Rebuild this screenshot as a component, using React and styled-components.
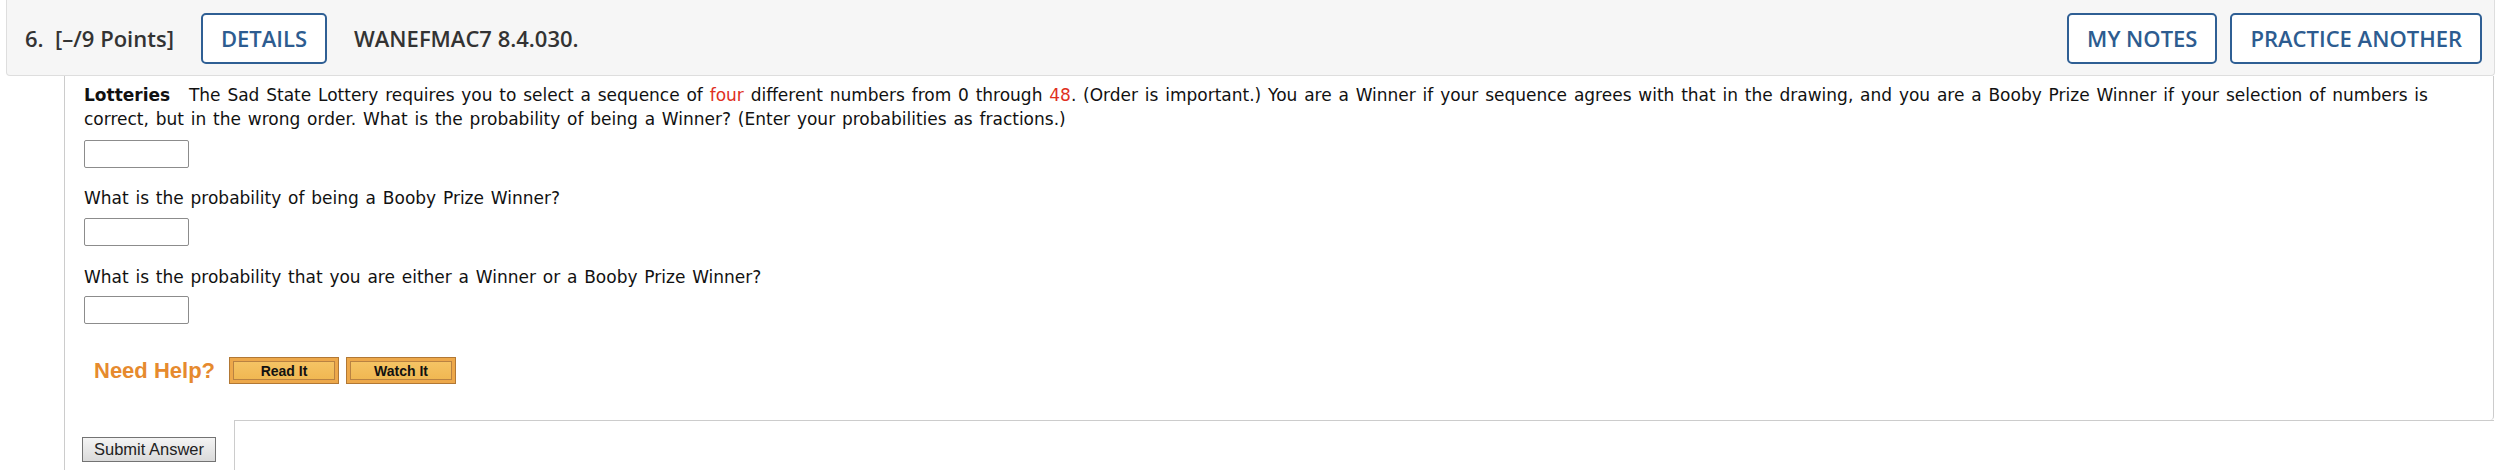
import React from 'react';
import styled, { createGlobalStyle } from 'styled-components';

const GlobalStyle = createGlobalStyle`
  body {
    margin: 0;
    background: #ffffff;
    font-family: "DejaVu Sans", Verdana, sans-serif;
  }
`;

const Page = styled.div`
  width: 2498px;
  height: 470px;
  overflow: hidden;
`;

const Header = styled.div`
  display: flex;
  align-items: center;
  justify-content: space-between;
  height: 75px;
  margin: 0 3px 0 6px;
  padding: 0 12px 0 18px;
  background: #f6f6f6;
  border: 1px solid #dedede;
  border-top: none;
  border-radius: 0 0 4px 4px;
  font-family: "Open Sans", sans-serif;
  font-size: 22px;
  font-weight: 600;
  color: #333333;
`;

const HeaderGroup = styled.div`
  display: flex;
  align-items: center;
  gap: ${p => p.gap || 13}px;
`;

const HeaderText = styled.span`
  white-space: pre;
`;

const OutlineButton = styled.button`
  height: 51px;
  padding: 0 18px;
  margin-top: 1px;
  background: #ffffff;
  border: 2px solid #2f5f94;
  border-radius: 5px;
  font-family: "Open Sans", sans-serif;
  font-size: 22px;
  font-weight: 600;
  color: #2d5c90;
  cursor: pointer;
`;

const Body = styled.div`
  margin: 0 4px 0 64px;
  border-left: 1px solid #cccccc;
  height: 394px;
`;

const Panel = styled.div`
  padding: 7px 40px 36px 19px;
  border-right: 1px solid #cccccc;
  border-bottom-right-radius: 4px;
  font-size: 17px;
  line-height: 24px;
  word-spacing: 1.4px;
  color: #111111;
`;

const Para = styled.p`
  margin: ${p => p.top || 0}px 0 0;
`;

const Strong = styled.b`
  margin-right: 12px;
`;

const Red = styled.span`
  color: #e0301e;
`;

const AnswerInput = styled.input`
  display: block;
  box-sizing: border-box;
  width: 105px;
  height: 28px;
  margin: ${p => p.top || 8}px 0 0;
  border: 1px solid #8c8c8c;
  border-radius: 2px;
  background: #ffffff;
`;

const HelpRow = styled.div`
  display: flex;
  align-items: center;
  margin: 33px 0 0 10px;
  height: 27px;
`;

const HelpLabel = styled.span`
  font-family: "Liberation Sans", Arial, sans-serif;
  font-size: 22px;
  font-weight: 700;
  word-spacing: 0;
  color: #e68a2e;
  margin-right: 14px;
`;

const HelpButton = styled.button`
  box-sizing: border-box;
  width: 110px;
  height: 27px;
  margin-right: 7px;
  padding: 0;
  background: linear-gradient(#f6c668, #efb54e);
  border: 1px solid #b27834;
  box-shadow: inset 0 0 0 3px #eda84a, inset 0 0 0 4px #b98242;
  font-family: "Liberation Sans", Arial, sans-serif;
  font-size: 14px;
  font-weight: 700;
  color: #111111;
  cursor: pointer;
`;

const Footer = styled.div`
  display: flex;
  height: 50px;
`;

const SubmitCell = styled.div`
  width: 152px;
  padding: 17px 0 0 17px;
`;

const SubmitButton = styled.button`
  box-sizing: border-box;
  width: 134px;
  height: 25px;
  padding: 0;
  background: linear-gradient(#f4f4f4, #dadada);
  border: 1px solid #737373;
  font-family: "Liberation Sans", Arial, sans-serif;
  font-size: 16.5px;
  color: #222222;
`;

const FooterBox = styled.div`
  flex: 1;
  border-top: 1px solid #cccccc;
  border-left: 1px solid #cccccc;
`;

export default function App() {
  return (
    <Page>
      <GlobalStyle />
      <Header>
        <HeaderGroup gap={27}>
          <HeaderText>6.  [–/9 Points]</HeaderText>
          <OutlineButton>DETAILS</OutlineButton>
          <HeaderText>WANEFMAC7 8.4.030.</HeaderText>
        </HeaderGroup>
        <HeaderGroup gap={13}>
          <OutlineButton>MY NOTES</OutlineButton>
          <OutlineButton>PRACTICE ANOTHER</OutlineButton>
        </HeaderGroup>
      </Header>
      <Body>
        <Panel>
          <Para>
            <Strong>Lotteries</Strong> The Sad State Lottery requires you to select a sequence of{' '}
            <Red>four</Red> different numbers from 0 through <Red>48</Red>. (Order is important.) You are
            a Winner if your sequence agrees with that in the drawing, and you are a Booby Prize Winner if
            your selection of numbers is correct, but in the wrong order. What is the probability of being
            a Winner? (Enter your probabilities as fractions.)
          </Para>
          <AnswerInput top={9} />
          <Para top={18}>What is the probability of being a Booby Prize Winner?</Para>
          <AnswerInput top={8} />
          <Para top={19}>What is the probability that you are either a Winner or a Booby Prize Winner?</Para>
          <AnswerInput top={7} />
          <HelpRow>
            <HelpLabel>Need Help?</HelpLabel>
            <HelpButton>Read It</HelpButton>
            <HelpButton>Watch It</HelpButton>
          </HelpRow>
        </Panel>
        <Footer>
          <SubmitCell>
            <SubmitButton>Submit Answer</SubmitButton>
          </SubmitCell>
          <FooterBox />
        </Footer>
      </Body>
    </Page>
  );
}
